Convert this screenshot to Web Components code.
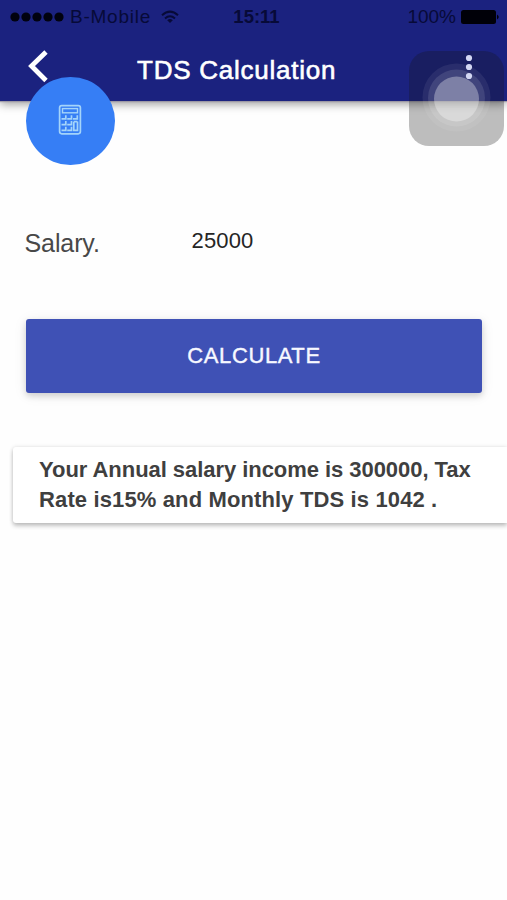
<!DOCTYPE html>
<html lang="en">
<head>
<meta charset="utf-8">
<meta name="viewport" content="width=device-width, initial-scale=1">
<title>TDS Calculation</title>
<style>
    body {
        margin: 0; background: #fefefe; color: #404040;
        font-family: "Liberation Sans", Arial, sans-serif;
    }
</style>
</head>
<body>
<tds-app></tds-app>

<script>
function attach(el, html) {
    const template = document.createElement('template')
    template.innerHTML = html
    el.attachShadow({mode: 'open'}).appendChild(template.content.cloneNode(true))
}

class StatusBar extends HTMLElement {
    constructor() {
        super()
        attach(this, `
            <style>
                :host {
                    display: grid; grid-template-columns: 1fr auto 1fr; align-items: center;
                    height: 34px; padding: 0 7px 0 10px; box-sizing: border-box;
                    color: #070a38; font-size: 19px; line-height: 34px;
                }
                .side { display: flex; align-items: center; }
                .right { justify-content: flex-end; }
                svg { display: block; flex: none; }
                .carrier { margin-left: 6px; letter-spacing: 0.75px; }
                .wifi { margin-left: 9px; }
                .time { font-size: 18.5px; font-weight: 700; margin-left: 3px; }
                .battery { margin-left: 4px; }
            </style>
            <div class="side">
                <svg width="54" height="12" viewBox="0 0 54 12" fill="#01020f">
                    <circle cx="5" cy="6" r="4.6"/><circle cx="16" cy="6" r="4.6"/>
                    <circle cx="27" cy="6" r="4.6"/><circle cx="38" cy="6" r="4.6"/>
                    <circle cx="49" cy="6" r="4.6"/>
                </svg>
                <span class="carrier">B-Mobile</span>
                <svg class="wifi" width="20" height="14" viewBox="0 0 20 14" fill="none" stroke="#070a38" stroke-width="2">
                    <path d="M2 5.2Q10-2 18 5.2"/>
                    <path d="M5 8.4Q10 4 15 8.4"/>
                    <path d="M7.2 10.2Q10 8 12.8 10.2L10 13Z" fill="#070a38" stroke="none"/>
                </svg>
            </div>
            <span class="time">15:11</span>
            <div class="side right">
                <span>100%</span>
                <svg class="battery" width="40" height="16" viewBox="0 0 40 16">
                    <rect x="1" y="1" width="35" height="14" rx="2.5" fill="#000008"/>
                    <path d="M37 5.5Q40.5 8 37 10.5Z" fill="#000008"/>
                </svg>
            </div>
        `)
    }
}
customElements.define('status-bar', StatusBar)

class AppHeader extends HTMLElement {
    constructor() {
        super()
        attach(this, `
            <style>
                :host {
                    display: block; height: 101px; background: #1b227f; color: #fff;
                    box-shadow: 0 1px 1px rgba(150,145,160,.8), 0 3px 9px rgba(0,0,0,.4);
                }
                .bar { display: flex; align-items: center; height: 67px; padding: 0 33px 0 28px; }
                svg { display: block; }
                .back { margin-top: -3px; }
                .title {
                    margin: 5px 0 0 88px; font-size: 26px; line-height: 30px; white-space: nowrap;
                    letter-spacing: 0.75px; -webkit-text-stroke: 0.6px #fff;
                }
                /* stays bright above the floating button */
                .more { position: relative; z-index: 1; margin: -1px 0 0 auto; }
            </style>
            <status-bar></status-bar>
            <div class="bar">
                <svg class="back" width="21" height="34" viewBox="0 0 21 34" fill="none" stroke="#fff" stroke-width="4.8">
                    <path d="M18 3L3.5 17L18 31.5"/>
                </svg>
                <span class="title"><slot></slot></span>
                <svg class="more" width="10" height="28" viewBox="0 0 10 28" fill="#d3d7f3">
                    <circle cx="5" cy="5" r="3.1"/><circle cx="5" cy="14" r="3.1"/><circle cx="5" cy="23" r="3.1"/>
                </svg>
            </div>
        `)
    }
}
customElements.define('app-header', AppHeader)

class CalcBadge extends HTMLElement {
    constructor() {
        super()
        attach(this, `
            <style>
                :host {
                    display: flex; align-items: center; justify-content: center;
                    width: 88.5px; height: 88px; border-radius: 50%; background: #367ef5;
                }
                svg { display: block; margin: -3px 0 0 -1px; }
            </style>
            <svg width="24" height="32" viewBox="0 0 24 32" fill="none" stroke="#a4d4fa" stroke-width="1.7">
                <rect x="1.6" y="1.6" width="20.8" height="28.2" rx="2.2"/>
                <rect x="4.5" y="4.6" width="15" height="4.2" stroke-width="1.4"/>
                <path d="M3.5 14.8h4.3v-3.6M9.2 14.8h4.3v-3.6M15 14.8h4.3v-3.6
                         M3.5 20.6h4.3V17M9.2 20.6h4.3V17M15.6 17.6h3.7
                         M3.5 26.4h4.3v-3.6M9.2 26.4h4.3v-3.6M15.8 18v8.4h3.7v-9"/>
            </svg>
        `)
    }
}
customElements.define('calc-badge', CalcBadge)

class SalaryField extends HTMLElement {
    constructor() {
        super()
        attach(this, `
            <style>
                :host { display: flex; align-items: flex-start; line-height: 30px; }
                .label { width: 167px; font-size: 25px; letter-spacing: -0.1px; color: #484848; }
                .value { font-size: 22px; color: #252525; margin-top: -2px; letter-spacing: 0.15px; }
            </style>
            <span class="label"><slot name="label"></slot></span>
            <span class="value"><slot></slot></span>
        `)
    }
}
customElements.define('salary-field', SalaryField)

class RaisedButton extends HTMLElement {
    constructor() {
        super()
        attach(this, `
            <style>
                :host { display: block; }
                button {
                    display: block; width: 100%; height: 74px; padding: 0; border: 0; border-radius: 3px;
                    background: #3f51b5; color: #f7f8ff; font: 22px/74px "Liberation Sans", Arial, sans-serif;
                    letter-spacing: 0.6px; -webkit-text-stroke: 0.4px #f7f8ff;
                    box-shadow: 0 3px 6px rgba(0,0,0,.15), 0 2px 14px rgba(0,0,0,.08);
                }
            </style>
            <button><slot></slot></button>
        `)
    }
}
customElements.define('raised-button', RaisedButton)

class ResultCard extends HTMLElement {
    constructor() {
        super()
        attach(this, `
            <style>
                :host {
                    display: block; box-sizing: border-box; height: 76px; padding: 8px 0 0 26px;
                    background: #fff; border-radius: 3px 0 0 3px;
                    font-size: 22px; font-weight: 700; line-height: 30px; color: #3f3f3f; white-space: nowrap;
                    box-shadow: 0 3px 4px rgba(0,0,0,.22), 0 0 4px rgba(0,0,0,.12);
                }
            </style>
            <slot></slot>
        `)
    }
}
customElements.define('result-card', ResultCard)

// translucent floating button that sits over the page
class AssistiveTouch extends HTMLElement {
    constructor() {
        super()
        attach(this, `
            <style>
                :host {
                    display: block; position: absolute; left: 409px; top: 51px;
                    width: 95px; height: 95px; border-radius: 20px; background: rgba(20,20,20,.28);
                }
                svg { display: block; }
            </style>
            <svg width="95" height="95" viewBox="0 0 95 95" fill="#fff">
                <circle cx="47.5" cy="46.5" r="34" fill-opacity=".07"/>
                <circle cx="47.5" cy="47" r="28.5" fill-opacity=".11"/>
                <circle cx="47.5" cy="48" r="22.5" fill-opacity=".32"/>
            </svg>
        `)
    }
}
customElements.define('assistive-touch', AssistiveTouch)

class TdsApp extends HTMLElement {
    constructor() {
        super()
        attach(this, `
            <style>
                :host { display: block; position: relative; height: 900px; overflow: hidden; }
                main { display: flex; flex-direction: column; }
                calc-badge { position: relative; margin: -24px 0 0 26px; }
                salary-field { margin: 63px 26px 0 24.5px; }
                raised-button { margin: 61px 25px 0 26px; }
                result-card { margin: 54px 0 0 13px; }
                .l1 { letter-spacing: -0.05px; }
                .l2 { letter-spacing: 0.13px; }
            </style>
            <app-header>TDS Calculation</app-header>
            <main>
                <calc-badge></calc-badge>
                <salary-field><span slot="label">Salary.</span>25000</salary-field>
                <raised-button>CALCULATE</raised-button>
                <result-card>
                    <span class="l1">Your Annual salary income is 300000, Tax</span><br>
                    <span class="l2">Rate is15% and Monthly TDS is 1042 .</span>
                </result-card>
            </main>
            <assistive-touch></assistive-touch>
        `)
    }
}
customElements.define('tds-app', TdsApp)
</script>
</body>
</html>
